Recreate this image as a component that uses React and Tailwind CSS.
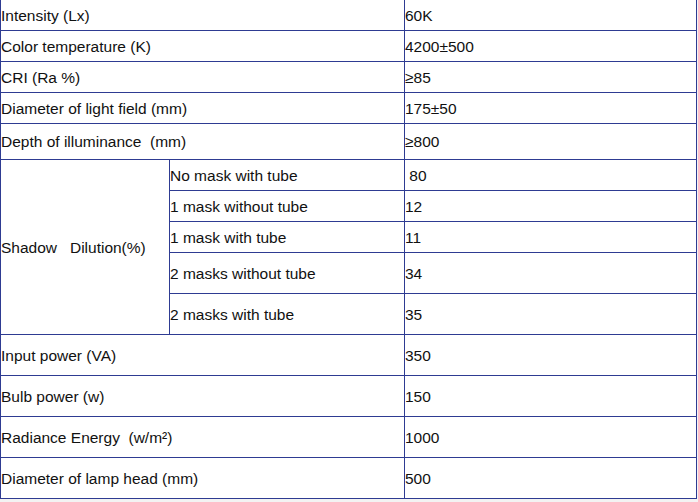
const rowsTop = [
    { label: "Intensity (Lx)", value: "60K", h: "h-[31px]" },
    { label: "Color temperature (K)", value: "4200±500", h: "h-[31px]" },
    { label: "CRI (Ra %)", value: "≥85", h: "h-[31px]" },
    { label: "Diameter of light field (mm)", value: "175±50", h: "h-[31px]" },
    { label: "Depth of illuminance  (mm)", value: "≥800", h: "h-[36px]" },
];

const shadowRows = [
    { label: "No mask with tube", value: " 80", h: "h-[31px]" },
    { label: "1 mask without tube", value: "12", h: "h-[31px]" },
    { label: "1 mask with tube", value: "11", h: "h-[31px]" },
    { label: "2 masks without tube", value: "34", h: "h-[41px]" },
    { label: "2 masks with tube", value: "35", h: "h-[41px]" },
];

const rowsBottom = [
    { label: "Input power (VA)", value: "350" },
    { label: "Bulb power (w)", value: "150" },
    { label: "Radiance Energy  (w/m²)", value: "1000" },
    { label: "Diameter of lamp head (mm)", value: "500" },
];

const Row = ({ label, value, h }) => (
    <div className={`flex ${h} border-b border-[#2e3b92]`}>
        <div className="w-[404px] shrink-0 border-r border-[#2e3b92] flex items-center whitespace-pre pt-px">
            {label}
        </div>
        <div className="flex-1 flex items-center whitespace-pre pt-px">{value}</div>
    </div>
);

export default function App() {
    return (
        <div
            className="min-h-screen bg-[#f3f3f3] text-[15.5px] text-[#111] leading-none"
            style={{ fontFamily: '"Liberation Sans", Arial, sans-serif' }}
        >
            <div className="w-[697px] bg-white border-x border-[#2e3b92]">
                {rowsTop.map((r) => (
                    <Row key={r.label} {...r} />
                ))}

                <div className="flex">
                    <div className="w-[169px] shrink-0 border-r border-b border-[#2e3b92] flex items-center whitespace-pre pt-px">
                        {"Shadow   Dilution(%)"}
                    </div>
                    <div className="flex-1 flex flex-col">
                        {shadowRows.map((r) => (
                            <div
                                key={r.label}
                                className={`flex ${r.h} border-b border-[#2e3b92]`}
                            >
                                <div className="w-[235px] shrink-0 border-r border-[#2e3b92] flex items-center pt-px">
                                    {r.label}
                                </div>
                                <div className="flex-1 flex items-center whitespace-pre pt-px">
                                    {r.value}
                                </div>
                            </div>
                        ))}
                    </div>
                </div>

                {rowsBottom.map((r) => (
                    <Row key={r.label} {...r} h="h-[41px]" />
                ))}
            </div>
        </div>
    );
}
